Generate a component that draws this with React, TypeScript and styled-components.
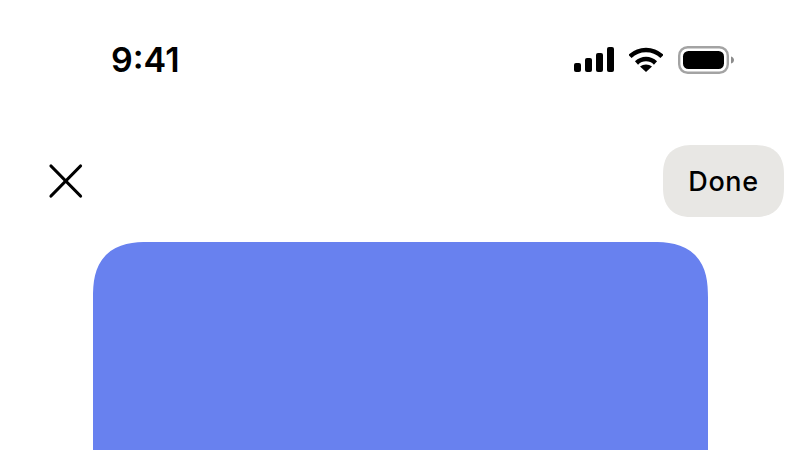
import styled, { createGlobalStyle } from 'styled-components';

const GlobalStyle = createGlobalStyle`
  html, body {
    margin: 0;
    padding: 0;
    background-color: #fff;
  }
`;

const Screen = styled.main`
  display: flex;
  flex-direction: column;
  width: 800px;
  height: 450px;
  overflow: hidden;
  background-color: #fff;
  font-family: Inter, 'Liberation Sans', sans-serif;
  color: #000;
`;

const StatusBar = styled.div`
  flex: none;
  display: flex;
  justify-content: space-between;
  align-items: center;
  box-sizing: border-box;
  height: 120px;
  padding: 0 65px 0 111px;
`;

const Time = styled.span`
  font-size: 34px;
  font-weight: 600;
  line-height: 1;
`;

const StatusIcons = styled.div`
  display: flex;
  align-items: center;
  gap: 15px;
`;

const NavBar = styled.div`
  flex: none;
  display: flex;
  justify-content: space-between;
  align-items: center;
  box-sizing: border-box;
  height: 72px;
  margin-top: 25px;
  padding: 0 16px 0 48px;
`;

const CloseButton = styled.button`
  display: flex;
  padding: 0;
  border: 0;
  background: none;
`;

const DoneButton = styled.button`
  width: 121px;
  height: 72px;
  padding: 0;
  border: 0;
  border-radius: 30px;
  corner-shape: superellipse(1.3);
  background-color: #e8e7e4;
  color: #000;
  font-family: inherit;
  font-size: 27px;
  font-weight: 500;
  letter-spacing: 0.6px;
`;

const Card = styled.section`
  flex: none;
  width: 615px;
  height: 300px;
  margin: 25px 0 0 93px;
  border-radius: 56px 56px 0 0;
  corner-shape: superellipse(1.4);
  background-color: #6881ef;
`;

const App = () => {
  return (
    <>
      <GlobalStyle />
      <Screen>
        <StatusBar>
          <Time>9:41</Time>
          <StatusIcons>
            <svg width="40" height="26" viewBox="0 0 40 26">
              <rect x="0" y="16" width="7" height="9" rx="2" />
              <rect x="11" y="11" width="7" height="14" rx="2" />
              <rect x="22" y="6" width="7" height="19" rx="2" />
              <rect x="33" y="0" width="7" height="25" rx="2" />
            </svg>
            <svg width="34" height="26" viewBox="0 0 34 26" fill="none" stroke="#000" strokeWidth="4.5">
              <path d="M1 9.5C10 0.8 24 0.8 33 9.5" />
              <path d="M7.5 16C13 10.8 21 10.8 26.5 16" />
              <path d="M17 25L11 19.5C14.5 16.8 19.5 16.8 23 19.5Z" fill="#000" stroke="none" />
            </svg>
            <svg width="57" height="28" viewBox="0 0 57 28">
              <rect x="1.2" y="1.2" width="48.6" height="25.6" rx="8.5" fill="none" stroke="#a3a3a3" strokeWidth="2.4" />
              <rect x="5" y="5" width="41" height="18" rx="5.5" />
              <path d="M53 10.5C55 11 56 12.5 56 14C56 15.5 55 17 53 17.5Z" fill="#8c8c8c" />
            </svg>
          </StatusIcons>
        </StatusBar>
        <NavBar>
          <CloseButton aria-label="Close">
            <svg width="35" height="36" viewBox="0 0 35 36" stroke="#000" strokeWidth="3.2" strokeLinecap="round">
              <path d="M3 3L32.5 33" />
              <path d="M32.5 3L3 33" />
            </svg>
          </CloseButton>
          <DoneButton>Done</DoneButton>
        </NavBar>
        <Card />
      </Screen>
    </>
  );
};

export default App;
